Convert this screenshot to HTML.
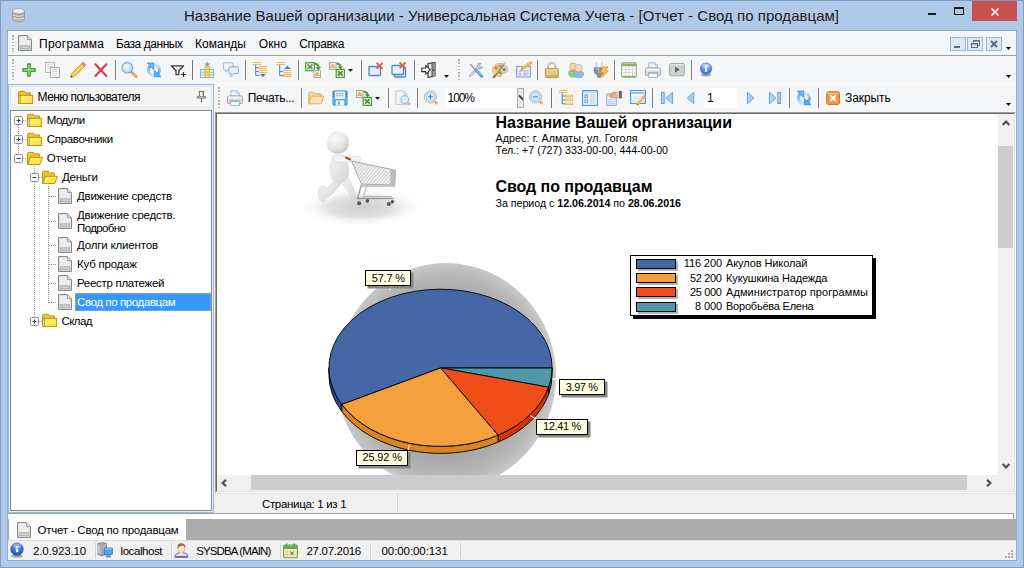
<!DOCTYPE html>
<html><head><meta charset="utf-8"><title>USU</title>
<style>
*{box-sizing:border-box;margin:0;padding:0}
html,body{width:1024px;height:568px;overflow:hidden}
body{background:#afcae8;font-family:"Liberation Sans",sans-serif;font-size:12px;color:#000;position:relative}
.a{position:absolute}
.t{position:absolute;white-space:nowrap;line-height:1}
.sep{position:absolute;width:1px;height:20px;background:#7a7a7a;box-shadow:1px 0 0 #fbfbfb,-1px 0 0 #fbfbfb}
.i{position:absolute;overflow:visible}
.lbl{position:absolute;background:#ffffe1;border:1px solid #000;box-shadow:2.5px 2.5px 0 #878787}
.grip{position:absolute;width:2px;height:21px;background:repeating-linear-gradient(#b4b4b4 0 1.6px,transparent 1.6px 3.3px)}

</style></head><body>
<div class="a" style="left:0;top:0;width:1024px;height:568px;border:1px solid #7e9cc2"></div>
<div class="a" style="left:928px;top:13px;width:8px;height:2px;background:#1b1b1b"></div>
<div class="a" style="left:954px;top:7px;width:10px;height:8px;border:1px solid #1b1b1b;border-top-width:2px"></div>
<div class="a" style="left:972px;top:1px;width:45px;height:20px;background:#c75050"></div>
<svg class="i" style="left:990px;top:7px" width="10" height="10" viewBox="0 0 10 10"><path d="M1.500 1.500L8.500 8.500M8.500 1.500L1.500 8.500" stroke="#fff" stroke-width="1.600" fill="none"/></svg>
<div class="a" style="left:7px;top:30px;width:1010px;height:531px;border:1px solid #8fa9c9;background:#f0f0f0"></div>
<div class="a" style="left:8px;top:31px;width:1008px;height:24px;background:#f5f6f7"></div>
<div class="a" style="left:8px;top:55px;width:1008px;height:1px;background:#a0a0a0"></div>
<div class="a" style="left:8px;top:56px;width:1008px;height:56px;background:#f5f6f7"></div>
<div class="a" style="left:214px;top:83px;width:802px;height:1px;background:#fcfcfc"></div>
<!-- mdi buttons -->
<div class="a" style="left:950px;top:37px;width:16px;height:14px;background:#dbe8f6;border:1px solid #a3b6cc"></div>
<div class="a" style="left:967px;top:37px;width:16px;height:14px;background:#dbe8f6;border:1px solid #a3b6cc"></div>
<div class="a" style="left:986px;top:37px;width:16px;height:14px;background:#dbe8f6;border:1px solid #a3b6cc"></div>
<div class="a" style="left:954px;top:46px;width:6px;height:2px;background:#5d6b7c"></div>
<svg class="i" style="left:967px;top:37px" width="16" height="14" viewBox="0 0 16 14"><path d="M6.5 5.5V3.5H12.5V8.5H10.5" stroke="#5d6b7c" fill="none"/><path d="M6 4H13" stroke="#5d6b7c"/><rect x="4.5" y="6.5" width="6" height="4" fill="none" stroke="#5d6b7c"/><path d="M4 7H11" stroke="#5d6b7c"/></svg>
<svg class="i" style="left:986px;top:37px" width="16" height="14" viewBox="0 0 16 14"><path d="M5 4L11 10M11 4L5 10" stroke="#5d6b7c" stroke-width="2" fill="none"/></svg>
<svg class="i" style="left:1006px;top:47px" width="5" height="3" viewBox="0 0 5 3"><path d="M0 0H5L2.5 3Z" fill="#000"/></svg>
<svg class="i" style="left:1006px;top:75px" width="5" height="3" viewBox="0 0 5 3"><path d="M0 0H5L2.5 3Z" fill="#000"/></svg>
<svg class="i" style="left:1006px;top:103px" width="5" height="3" viewBox="0 0 5 3"><path d="M0 0H5L2.5 3Z" fill="#000"/></svg>
<!-- left panel -->
<div class="a" style="left:8px;top:84px;width:206px;height:429px;border:1px solid #8dbdf0;background:#f0f0f0"></div>
<div class="a" style="left:10px;top:86px;width:202px;height:22px;background:#f5f5f5;border:1px solid #e2e3e4"></div>
<div class="a" style="left:10px;top:110px;width:202px;height:401px;background:#fff;border:1px solid #828790"></div>
<div class="a" style="left:75px;top:293px;width:136px;height:18px;background:#3399ff;border:1px dotted #e0a060"></div>
<!-- report -->
<div class="a" style="left:215px;top:112px;width:801px;height:381px;background:#fff"></div>
<div class="a" id="rep" style="left:217px;top:114px;width:781px;height:361px;background:#fff;overflow:hidden">
<svg class="i" style="left:83px;top:0px" width="125" height="112" viewBox="300 114 125 112">
<defs><radialGradient id="fl" cx=".5" cy=".5" r=".5"><stop offset="0" stop-color="#cfcfcf"/><stop offset=".5" stop-color="#e0e0e0"/><stop offset="1" stop-color="#fff" stop-opacity="0"/></radialGradient>
<radialGradient id="hd" cx=".38" cy=".32" r=".75"><stop offset="0" stop-color="#fbfbfb"/><stop offset=".6" stop-color="#e6e6e6"/><stop offset="1" stop-color="#c2c2c2"/></radialGradient>
<linearGradient id="bd" x1="0" y1="0" x2="1" y2="1"><stop offset="0" stop-color="#f6f6f6"/><stop offset="1" stop-color="#d2d2d2"/></linearGradient>
<pattern id="ht" width="2.6" height="2.6" patternUnits="userSpaceOnUse" patternTransform="rotate(40)"><rect width="2.6" height="2.6" fill="#f0f0f0"/><path d="M0 0V2.600" stroke="#b4b4b4" stroke-width="1"/></pattern></defs>
<ellipse cx="361" cy="207" rx="64" ry="20" fill="url(#fl)"/>
<path d="M338 177Q331 184 326.500 189Q326 186 323 185.500Q318 186 318 192Q318.500 199 321.500 201.500Q325 202.500 325.500 198.500Q331 196 334 192Q339 187 343 181Z" fill="url(#bd)" stroke="#cdcdcd" stroke-width="0.4"/>
<path d="M338 180Q345 186 349 193Q350 196 351.500 198Q352 202 356 202.300Q361 202.500 360.500 200Q358 197 356 195.500Q354 187 348 177Z" fill="url(#bd)" stroke="#cdcdcd" stroke-width="0.4"/>
<path d="M334 155Q329 163 330 173Q331 182 339 183Q348 182 349 173Q349.500 165 344 155Z" fill="url(#bd)" stroke="#d0d0d0" stroke-width="0.4"/>
<path d="M332 157Q333 161 338 162.500Q345 163 350 161.500L359 161.500Q362.500 160 361 157.500Q358 155.500 354 156.500L345 157Q338 154 334 154.500Z" fill="#f2f2f2" stroke="#cfcfcf" stroke-width="0.5"/>
<circle cx="337.700" cy="142.700" r="11.100" fill="url(#hd)"/>
<path d="M346 157.500L350 159.500" stroke="#d8342c" stroke-width="2" stroke-linecap="round"/>
<path d="M351.500 161L395.600 170.300L394.800 185L361.500 184.200Z" fill="url(#ht)" stroke="#a0a0a0" stroke-width="0.9"/>
<path d="M390.500 169.300L395.600 170.300L394.800 185L390 184.900Z" fill="#bcbcbc"/>
<path d="M361.500 184.500L357.500 198.500H393.500" fill="none" stroke="#989898" stroke-width="1.3"/>
<path d="M367 184.500L363.500 196.500H392" fill="none" stroke="#b4b4b4" stroke-width="1"/>
<path d="M361 186H395" stroke="#b8b8b8" stroke-width="1.600"/>
<circle cx="359.100" cy="203.200" r="2" fill="#5a5050"/><circle cx="367.400" cy="200.900" r="1.800" fill="#5a5050"/><circle cx="388.800" cy="204" r="2" fill="#5a5050"/><circle cx="392.400" cy="201.700" r="1.700" fill="#5a5050"/>
<circle cx="359.100" cy="203.200" r="0.800" fill="#c84040"/><circle cx="388.800" cy="204" r="0.800" fill="#c84040"/>
</svg><svg class="i" style="left:0;top:0" width="781" height="361" viewBox="217 114 781 361"><defs><radialGradient id="sh" cx=".5" cy=".5" r=".5"><stop offset="0" stop-color="#9c9c9c"/><stop offset=".7" stop-color="#a6a6a6"/><stop offset=".9" stop-color="#b8b8b8"/><stop offset="1" stop-color="#c9c9c9"/></radialGradient></defs><ellipse cx="446" cy="376" rx="110" ry="113" fill="url(#sh)"/><path d="M552.10 367.80A111.6 78.6 0 0 1 548.65 387.20L548.65 394.20A111.6 78.6 0 0 0 552.10 374.80Z" fill="#357888" stroke="#000" stroke-width="0.9"/><path d="M548.65 387.20A111.6 78.6 0 0 1 498.03 435.15L498.03 442.15A111.6 78.6 0 0 0 548.65 394.20Z" fill="#cf3608" stroke="#000" stroke-width="0.9"/><path d="M498.03 435.15A111.6 78.6 0 0 1 341.71 404.36L341.71 411.36A111.6 78.6 0 0 0 498.03 442.15Z" fill="#dc8420" stroke="#000" stroke-width="0.9"/><path d="M341.71 404.36A111.6 78.6 0 0 1 328.90 367.80L328.90 374.80A111.6 78.6 0 0 0 341.71 411.36Z" fill="#2f4a86" stroke="#000" stroke-width="0.9"/><path d="M440.50 367.80L552.10 367.80A111.6 78.6 0 0 1 548.65 387.20Z" fill="#4e98aa" stroke="#000" stroke-width="0.9" stroke-linejoin="round"/><path d="M440.50 367.80L548.65 387.20A111.6 78.6 0 0 1 498.03 435.15Z" fill="#f04e18" stroke="#000" stroke-width="0.9" stroke-linejoin="round"/><path d="M440.50 367.80L498.03 435.15A111.6 78.6 0 0 1 341.71 404.36Z" fill="#f4a03c" stroke="#000" stroke-width="0.9" stroke-linejoin="round"/><path d="M440.50 367.80L341.71 404.36A111.6 78.6 0 1 1 552.10 367.80Z" fill="#4667a5" stroke="#000" stroke-width="0.9" stroke-linejoin="round"/><path d="M389 285L390 290M408 450L409.5 444.5M530 415.5L536 419M552 379H559" stroke="#fff" stroke-width="1"/></svg><div class="lbl" style="left:148.0px;top:156.0px;width:46.0px;height:16.0px"></div><div class="lbl" style="left:342.0px;top:265.0px;width:46.0px;height:16.0px"></div><div class="lbl" style="left:319.0px;top:305.0px;width:52.0px;height:16.0px"></div><div class="lbl" style="left:139.0px;top:336.0px;width:52.0px;height:16.0px"></div><div class="a" style="left:413px;top:141px;width:243px;height:61px;background:#fff;border:1px solid #000;box-shadow:3px 3px 0 #000"></div><div class="a" style="left:419px;top:145.0px;width:40px;height:10px;background:#4667a5;border:1px solid #000;box-shadow:2px 2px 0 #b4b4b4"></div><div class="a" style="left:419px;top:159.2px;width:40px;height:10px;background:#f4a03c;border:1px solid #000;box-shadow:2px 2px 0 #b4b4b4"></div><div class="a" style="left:419px;top:173.3px;width:40px;height:10px;background:#f04e18;border:1px solid #000;box-shadow:2px 2px 0 #b4b4b4"></div><div class="a" style="left:419px;top:187.5px;width:40px;height:10px;background:#4e98aa;border:1px solid #000;box-shadow:2px 2px 0 #b4b4b4"></div>
</div>
<div class="a" style="left:215px;top:112px;width:801px;height:381px;border:1px solid;border-color:#a0a0a0 #fff #fff #a0a0a0"></div>
<div class="a" style="left:216px;top:113px;width:799px;height:379px;border:1px solid;border-color:#696969 #e3e3e3 #e3e3e3 #696969"></div>
<!-- scrollbars -->
<div class="a" style="left:998px;top:114px;width:16px;height:377px;background:#f0f0f0"></div>
<div class="a" style="left:217px;top:475px;width:797px;height:16px;background:#f0f0f0"></div>
<div class="a" style="left:998px;top:146px;width:15px;height:102px;background:#cdcdcd"></div>
<div class="a" style="left:251px;top:475px;width:716px;height:15px;background:#cdcdcd"></div>
<svg class="i" style="left:1002px;top:120px" width="8" height="6" viewBox="0 0 8 6"><path d="M0.7 5L4 1.6L7.3 5" stroke="#4d4d4d" stroke-width="2.1" fill="none"/></svg>
<svg class="i" style="left:1002px;top:463px" width="8" height="6" viewBox="0 0 8 6"><path d="M0.7 1L4 4.4L7.3 1" stroke="#4d4d4d" stroke-width="2.1" fill="none"/></svg>
<svg class="i" style="left:221px;top:479px" width="6" height="8" viewBox="0 0 6 8"><path d="M5 0.7L1.6 4L5 7.3" stroke="#4d4d4d" stroke-width="2.1" fill="none"/></svg>
<svg class="i" style="left:986px;top:479px" width="6" height="8" viewBox="0 0 6 8"><path d="M1 0.7L4.4 4L1 7.3" stroke="#4d4d4d" stroke-width="2.1" fill="none"/></svg>
<!-- page status -->
<div class="a" style="left:215px;top:493px;width:801px;height:1px;background:#e2e2e2"></div>
<div class="a" style="left:397px;top:494px;width:1px;height:18px;background:#d5d5d5"></div>
<div class="a" style="left:8px;top:513px;width:1006px;height:6px;background:#fff;border-top:1px solid #a0a0a0;border-right:1px solid #a0a0a0"></div>
<div class="a" style="left:8px;top:519px;width:1008px;height:21px;background:#ababab"></div>
<div class="a" style="left:9px;top:518px;width:177px;height:22px;background:#fff"></div>
<div class="a" style="left:8px;top:540px;width:1008px;height:1px;background:#dcdcdc"></div>
<!-- status bar dividers -->
<div class="a" style="left:95px;top:543px;width:1px;height:16px;background:#d2d2d2"></div>
<div class="a" style="left:171px;top:543px;width:1px;height:16px;background:#d2d2d2"></div>
<div class="a" style="left:280px;top:543px;width:1px;height:16px;background:#d2d2d2"></div>
<div class="a" style="left:370px;top:543px;width:1px;height:16px;background:#d2d2d2"></div>
<div class="a" style="left:460px;top:543px;width:1px;height:16px;background:#d2d2d2"></div>
<svg class="i" style="left:1002px;top:547px" width="12" height="12" viewBox="0 0 12 12"><g fill="#b0b0b0"><rect x="9" y="9" width="2" height="2"/><rect x="6" y="9" width="2" height="2"/><rect x="3" y="9" width="2" height="2"/><rect x="9" y="6" width="2" height="2"/><rect x="6" y="6" width="2" height="2"/><rect x="9" y="3" width="2" height="2"/></g></svg>

<div class="sep" style="left:115px;top:60px"></div>
<div class="sep" style="left:192px;top:60px"></div>
<div class="sep" style="left:245px;top:60px"></div>
<div class="sep" style="left:298px;top:60px"></div>
<div class="sep" style="left:361px;top:60px"></div>
<div class="sep" style="left:414px;top:60px"></div>
<div class="sep" style="left:537px;top:60px"></div>
<div class="sep" style="left:614px;top:60px"></div>
<div class="sep" style="left:691px;top:60px"></div>
<div class="sep" style="left:301px;top:88px"></div>
<div class="sep" style="left:388px;top:88px"></div>
<div class="sep" style="left:417px;top:88px"></div>
<div class="sep" style="left:551px;top:88px"></div>
<div class="sep" style="left:652px;top:88px"></div>
<div class="sep" style="left:789px;top:88px"></div>
<div class="sep" style="left:818px;top:88px"></div>
<div class="grip" style="left:12px;top:59px;height:21px"></div>
<div class="grip" style="left:458px;top:59px;height:21px"></div>
<div class="grip" style="left:218px;top:87px;height:21px"></div>
<div class="grip" style="left:12px;top:35px;height:17px"></div>
<div class="a" style="left:445px;top:88px;width:72px;height:20px;background:#fff"></div>
<div class="a" style="left:517px;top:88px;width:7px;height:20px;background:#e9e9e9;border:1px solid #adadad"></div>
<svg class="a" style="left:517px;top:94px;overflow:hidden" width="6" height="8" viewBox="0 0 6 8"><path d="M2 1.400L5.800 5.400L8 3.2" stroke="#3a3a3a" stroke-width="1.9" fill="none"/></svg>
<div class="a" style="left:704px;top:88px;width:34px;height:20px;background:#fff"></div>
<div class="a" style="left:18px;top:125px;width:1px;height:10px;background:repeating-linear-gradient(180deg,#9a9a9a 0 1px,transparent 1px 2px)"></div>
<div class="a" style="left:18px;top:144px;width:1px;height:10px;background:repeating-linear-gradient(180deg,#9a9a9a 0 1px,transparent 1px 2px)"></div>
<div class="a" style="left:23px;top:120px;width:3px;height:1px;background:repeating-linear-gradient(90deg,#9a9a9a 0 1px,transparent 1px 2px)"></div>
<div class="a" style="left:23px;top:139px;width:3px;height:1px;background:repeating-linear-gradient(90deg,#9a9a9a 0 1px,transparent 1px 2px)"></div>
<div class="a" style="left:23px;top:158px;width:3px;height:1px;background:repeating-linear-gradient(90deg,#9a9a9a 0 1px,transparent 1px 2px)"></div>
<div class="a" style="left:34px;top:166px;width:1px;height:7px;background:repeating-linear-gradient(180deg,#9a9a9a 0 1px,transparent 1px 2px)"></div>
<div class="a" style="left:34px;top:182px;width:1px;height:135px;background:repeating-linear-gradient(180deg,#9a9a9a 0 1px,transparent 1px 2px)"></div>
<div class="a" style="left:39px;top:177px;width:3px;height:1px;background:repeating-linear-gradient(90deg,#9a9a9a 0 1px,transparent 1px 2px)"></div>
<div class="a" style="left:39px;top:321px;width:3px;height:1px;background:repeating-linear-gradient(90deg,#9a9a9a 0 1px,transparent 1px 2px)"></div>
<div class="a" style="left:48px;top:186px;width:1px;height:117px;background:repeating-linear-gradient(180deg,#9a9a9a 0 1px,transparent 1px 2px)"></div>
<div class="a" style="left:49px;top:196px;width:8px;height:1px;background:repeating-linear-gradient(90deg,#9a9a9a 0 1px,transparent 1px 2px)"></div>
<div class="a" style="left:49px;top:221px;width:8px;height:1px;background:repeating-linear-gradient(90deg,#9a9a9a 0 1px,transparent 1px 2px)"></div>
<div class="a" style="left:49px;top:245px;width:8px;height:1px;background:repeating-linear-gradient(90deg,#9a9a9a 0 1px,transparent 1px 2px)"></div>
<div class="a" style="left:49px;top:264px;width:8px;height:1px;background:repeating-linear-gradient(90deg,#9a9a9a 0 1px,transparent 1px 2px)"></div>
<div class="a" style="left:49px;top:283px;width:8px;height:1px;background:repeating-linear-gradient(90deg,#9a9a9a 0 1px,transparent 1px 2px)"></div>
<div class="a" style="left:49px;top:302px;width:8px;height:1px;background:repeating-linear-gradient(90deg,#9a9a9a 0 1px,transparent 1px 2px)"></div>
<svg width="0" height="0" style="position:absolute"><defs><radialGradient id="mg" cx=".4" cy=".35" r=".7"><stop offset="0" stop-color="#f2f9ff"/><stop offset="1" stop-color="#b4d8f6"/></radialGradient><linearGradient id="rf1" x1="0" y1="0" x2="0" y2="1"><stop offset="0" stop-color="#5ea6e6"/><stop offset="1" stop-color="#cfe6f9"/></linearGradient><linearGradient id="rf2" x1="0" y1="0" x2="0" y2="1"><stop offset="0" stop-color="#d6eafa"/><stop offset="1" stop-color="#4f9ce2"/></linearGradient><linearGradient id="fg" x1="0" y1="0" x2="1" y2="1"><stop offset="0" stop-color="#fff78a"/><stop offset="1" stop-color="#ffd92e"/></linearGradient><radialGradient id="gs" cx=".5" cy=".3" r=".75"><stop offset="0" stop-color="#6a9ce8"/><stop offset=".6" stop-color="#2f68cc"/><stop offset="1" stop-color="#1f4ca8"/></radialGradient><radialGradient id="gi" cx=".5" cy=".3" r=".75"><stop offset="0" stop-color="#9cc0f6"/><stop offset=".6" stop-color="#4f86de"/><stop offset="1" stop-color="#3262be"/></radialGradient></defs></svg>
<svg class="i" style="left:12px;top:8px" width="13" height="15" viewBox="0 0 13 15"><ellipse cx="6.5" cy="11" rx="6" ry="3" fill="#bdbdbd" stroke="#8e8e8e" stroke-width="0.7"/><rect x="0.5" y="3" width="12" height="8" fill="#cfcfcf"/><path d="M0.5 3V11M12.5 3V11" stroke="#8e8e8e" stroke-width="0.7"/><path d="M0.5 5.6Q6.5 8.6 12.5 5.6M0.5 8.2Q6.500 11.200 12.5 8.2" stroke="#8a8a8a" stroke-width="0.8" fill="none"/><ellipse cx="6.5" cy="3" rx="6" ry="2.600" fill="#ececec" stroke="#9a9a9a" stroke-width="0.7"/></svg>
<svg class="i" style="left:18px;top:35px" width="14" height="16" viewBox="0 0 14 16"><path d="M0.6 0.6H9.4L13.4 4.6V15.4H0.6Z" fill="#ededed" stroke="#7c7c7c" stroke-width="1" stroke-linejoin="round"/><path d="M9.4 0.6V4.6H13.4" fill="#dadada" stroke="#8c8c8c" stroke-width="0.8"/><rect x="2.2" y="10.8" width="9.6" height="3" fill="#cfcfcf" stroke="#a4a4a4" stroke-width="0.8"/></svg>
<svg class="i" style="left:22px;top:63px" width="16" height="16" viewBox="0 0 16 16"><path d="M5.5 0.7H8.5V5.5H13.3V8.5H8.5V13.3H5.5V8.5H0.7V5.5H5.5Z" fill="#56bd46" stroke="#3e9e30" stroke-width="0.9" stroke-linejoin="round"/><path d="M7 2V12M2 7H12" stroke="#b4eaa4" stroke-width="0.9"/></svg>
<svg class="i" style="left:45px;top:62px" width="16" height="16" viewBox="0 0 16 16"><rect x="0.5" y="0.5" width="9" height="10" fill="#f6f6f6" stroke="#b4b4b4"/><path d="M2 2.5H8M2 4.5H8M2 6.5H5" stroke="#cfcfcf" stroke-width="0.8"/><rect x="5.5" y="5.5" width="9" height="10" fill="#f9f9f9" stroke="#a8a8a8"/><path d="M7.5 7.5H12.5M7.5 9.5H12.5M7.5 11.5H12.5M7.5 13.5H11" stroke="#c6c6c6" stroke-width="0.8"/></svg>
<svg class="i" style="left:70px;top:62px" width="16" height="16" viewBox="0 0 16 16"><path d="M0.6 15.4L1.8 11.2L11.4 1.6L14.4 4.6L4.8 14.2Z" fill="#f5c53a" stroke="#c89a28" stroke-width="0.8"/><path d="M3.3 12.7L12.9 3.1" stroke="#fbe28a" stroke-width="1.2"/><path d="M11.4 1.6L12.6 0.5Q13.4 0 14.2 0.8L15.3 1.9Q15.9 2.7 15.3 3.4L14.4 4.6Z" fill="#ee8a8a" stroke="#c86a6a" stroke-width="0.6"/><path d="M0.6 15.4L1.8 11.2L4.8 14.2Z" fill="#e8cfa0"/><path d="M0.6 15.4L1.2 13.2L2.8 14.8Z" fill="#3a3a3a"/></svg>
<svg class="i" style="left:93px;top:62px" width="16" height="16" viewBox="0 0 16 16"><path d="M2.4 2.2L13.4 14M13.4 2.2L2.4 14" stroke="#d2404c" stroke-width="2.1" stroke-linecap="round" fill="none"/></svg>
<svg class="i" style="left:121px;top:62px" width="16" height="16" viewBox="0 0 16 16"><path d="M10 9.8L15 14.6" stroke="#d99848" stroke-width="2.8" stroke-linecap="round"/><path d="M10.4 10L14.6 14.2" stroke="#f6cf90" stroke-width="1"/><circle cx="6.3" cy="5.8" r="5.3" fill="url(#mg)" stroke="#7eb2e0" stroke-width="1.3"/></svg>
<svg class="i" style="left:146px;top:62px" width="16" height="16" viewBox="0 0 16 16"><path d="M7.4 13.6A5.3 5.6 0 0 1 4.4 3.8" fill="none" stroke="url(#rf1)" stroke-width="3"/><path d="M8.6 2.4A5.3 5.6 0 0 1 11.6 12.2" fill="none" stroke="url(#rf2)" stroke-width="3"/><path d="M1.3 1H7.8V7.6Z" fill="#6cbcf6" stroke="#3f8edc" stroke-width="0.9" stroke-linejoin="round"/><path d="M8.3 8.4L15 14.7H8.3Z" fill="#52b8fa" stroke="#3f8edc" stroke-width="0.9" stroke-linejoin="round"/></svg>
<svg class="i" style="left:170px;top:62px" width="16" height="16" viewBox="0 0 16 16"><path d="M1.2 3.8H13.6L8.8 8.8V12.6H6V8.8Z" fill="#e6e6e6" stroke="#3c3c3c" stroke-width="1.3" stroke-linejoin="round"/><path d="M11 12.5H16M13.5 10V15" stroke="#2d2d2d" stroke-width="1.2"/></svg>
<svg class="i" style="left:199px;top:62px" width="16" height="16" viewBox="0 0 16 16"><rect x="1.5" y="7.5" width="13" height="8" fill="#fff" stroke="#7cb2f0"/><path d="M1.5 10.200H14.5M1.5 12.900H14.5" stroke="#7cb2f0"/><rect x="6" y="4.5" width="4.600" height="11" fill="#fae466" stroke="#d8b03a" stroke-width="0.9"/><path d="M6 7.3H10.6M6 10.100H10.600M6 12.900H10.600" stroke="#d8b03a" stroke-width="0.9"/><path d="M8.3 0V2.800M5.900 1.4L8.300 3.800L10.700 1.400" stroke="#6aa6e6" stroke-width="1.3" fill="none"/></svg>
<svg class="i" style="left:223px;top:62px" width="16" height="16" viewBox="0 0 16 16"><path d="M1.5 0.8H8.8Q10 0.8 10 2V6.5Q10 7.7 8.8 7.7H5.2L2.8 10V7.7H1.5Q0.6 7.7 0.6 6.5V2Q0.6 0.8 1.5 0.8Z" fill="#eef5fc" stroke="#8db6de"/><path d="M7 4.8H14.3Q15.4 4.8 15.4 6V10.5Q15.4 11.7 14.3 11.7H10.6L8 14.6V11.7H7Q5.9 11.7 5.9 10.5V6Q5.9 4.8 7 4.8Z" fill="#e6f0fa" stroke="#7fabd8"/></svg>
<svg class="i" style="left:252px;top:62px" width="16" height="16" viewBox="0 0 16 16"><path d="M3.7 2.6V13.3M3.7 5.6H7M3.7 9.6H7M3.7 13.3H7.6" stroke="#3f7fd8" fill="none" stroke-width="1"/><rect x="1.2" y="0.6" width="7.6" height="1.800" fill="#fdf3d0" stroke="#e2ae48" stroke-width="0.8"/><rect x="7.2" y="4.600" width="7.6" height="1.900" fill="#fdf3d0" stroke="#e2ae48" stroke-width="0.8"/><rect x="7.2" y="8.600" width="7.6" height="1.900" fill="#fdf3d0" stroke="#e2ae48" stroke-width="0.8"/><path d="M7.8 12.1H14L10.9 15.1Z" fill="#3f7fd8"/></svg>
<svg class="i" style="left:276px;top:62px" width="16" height="16" viewBox="0 0 16 16"><path d="M3.7 2.6V13.6M3.7 13.6H7.2M3.7 9.6H7.2" stroke="#3f7fd8" fill="none" stroke-width="1"/><rect x="1.2" y="0.6" width="7.6" height="1.800" fill="#fdf3d0" stroke="#e2ae48" stroke-width="0.8"/><rect x="7.4" y="8.600" width="7.4" height="1.900" fill="#fdf3d0" stroke="#e2ae48" stroke-width="0.8"/><rect x="7.4" y="12.500" width="7.4" height="1.900" fill="#fdf3d0" stroke="#e2ae48" stroke-width="0.8"/><path d="M7.9 6.9H15L11.4 3.7Z" fill="#3f7fd8"/></svg>
<svg class="i" style="left:305px;top:62px" width="16" height="16" viewBox="0 0 16 16"><rect x="0.7" y="0.7" width="8.6" height="8" fill="#eaf5e4" stroke="#4a9a3e" stroke-width="1.2"/><path d="M2.5 2.5L7.5 7M7.5 2.5L2.5 7" stroke="#3f9134" stroke-width="1.6"/><path d="M9.5 1.5Q13.5 2 13.5 5.5" stroke="#3fa132" stroke-width="2" fill="none"/><path d="M10.6 5H16L13.4 8.4Z" fill="#3fa132"/><rect x="9" y="8.5" width="6.5" height="7" fill="#f2f2f2" stroke="#a8a8a8"/><path d="M12.2 10L14.4 13.6H10Z" fill="#f6b73a" stroke="#d98f1f" stroke-width="0.6"/></svg>
<svg class="i" style="left:329px;top:62px" width="16" height="16" viewBox="0 0 16 16"><rect x="0.5" y="0.5" width="6.5" height="7" fill="#f2f2f2" stroke="#a8a8a8"/><path d="M3.7 2L5.9 5.6H1.5Z" fill="#f6b73a" stroke="#d98f1f" stroke-width="0.6"/><path d="M7.5 1.5Q11.5 2 11.5 5" stroke="#3fa132" stroke-width="2" fill="none"/><path d="M8.8 4.4H14.2L11.5 7.6Z" fill="#3fa132"/><rect x="7.2" y="7.4" width="8.2" height="8" fill="#eaf5e4" stroke="#4a9a3e" stroke-width="1.2"/><path d="M9 9.2L13.6 13.6M13.6 9.2L9 13.6" stroke="#3f9134" stroke-width="1.6"/></svg>
<svg class="i" style="left:348px;top:68.5px" width="5" height="3" viewBox="0 0 5 3"><path d="M0 0H5L2.5 2.8Z" fill="#000"/></svg>
<svg class="i" style="left:368px;top:62px" width="16" height="16" viewBox="0 0 16 16"><rect x="1" y="4.5" width="11.5" height="9" rx="1" fill="#e9f2fc" stroke="#3f86dc" stroke-width="1.3"/><path d="M2 6H11.5" stroke="#cfe2f8" stroke-width="1.4"/><path d="M8.6 0.8L14.6 6.8M14.6 0.8L8.6 6.8" stroke="#e0603c" stroke-width="1.9"/></svg>
<svg class="i" style="left:391px;top:62px" width="16" height="16" viewBox="0 0 16 16"><rect x="3.5" y="6.5" width="11" height="8.5" rx="1" fill="#e9f2fc" stroke="#3f86dc" stroke-width="1.3"/><rect x="1" y="3.5" width="11.5" height="9" rx="1" fill="#e9f2fc" stroke="#3f86dc" stroke-width="1.3"/><path d="M8.6 0.3L14.6 6.3M14.6 0.3L8.6 6.3" stroke="#e0603c" stroke-width="1.9"/></svg>
<svg class="i" style="left:421px;top:62px" width="16" height="16" viewBox="0 0 16 16"><path d="M7 1.5L14 0.5V14L7 15.5Z" fill="#e3e3e3" stroke="#2e2e2e" stroke-width="1.1" stroke-linejoin="round"/><path d="M11 1.2V14.8H13.6V1Z" fill="#9a9a9a"/><path d="M11 1V15" stroke="#2e2e2e" stroke-width="0.8"/><path d="M12.4 7.5V9" stroke="#2e2e2e"/><path d="M0.8 6H4.8V3.4L9.2 7.8L4.8 12.2V9.6H0.8Z" fill="#fff" stroke="#2e2e2e" stroke-width="1.1" stroke-linejoin="round"/></svg>
<svg class="i" style="left:444px;top:75px" width="5" height="3" viewBox="0 0 5 3"><path d="M0 0H5L2.5 2.8Z" fill="#000"/></svg>
<svg class="i" style="left:468px;top:62px" width="16" height="16" viewBox="0 0 16 16"><path d="M2 14L11 4.5" stroke="#b9bcc0" stroke-width="2.6" stroke-linecap="round"/><path d="M10 1.5A3.2 3.2 0 0 0 10.5 6.5A3.2 3.2 0 0 0 14.8 5L12.6 5.2L11.6 3.4L12.8 1.4A3.2 3.2 0 0 0 10 1.5Z" fill="#c9ccd0" stroke="#8f9499" stroke-width="0.7"/><path d="M2 14L11 4.5" stroke="#e7e9eb" stroke-width="0.9"/><path d="M2 2L8 8.3" stroke="#8a8f96" stroke-width="1.2"/><path d="M8 8.3L13.8 14.2" stroke="#4a9fe8" stroke-width="3" stroke-linecap="round"/><path d="M8.8 8.6L13.6 13.5" stroke="#a6d4f8" stroke-width="0.9"/></svg>
<svg class="i" style="left:492px;top:62px" width="16" height="16" viewBox="0 0 16 16"><path d="M8 1.5C12.5 1.5 15.5 4.2 15.5 7.6C15.5 10.6 13.2 11.4 11.2 11.2C9.8 11.1 9.4 12.2 9.8 13C10.2 14 9.4 14.8 7.6 14.6C3.6 14.2 0.6 11.4 0.6 7.8C0.6 4.2 3.8 1.5 8 1.5Z" fill="#f3d199" stroke="#d6ab6a" stroke-width="0.8"/><circle cx="4" cy="6" r="1.7" fill="#ee6a5a"/><circle cx="8" cy="3.9" r="1.5" fill="#9a9a9a"/><circle cx="12.2" cy="7.6" r="1.7" fill="#4c8ee0"/><circle cx="8.4" cy="11" r="1.6" fill="#58b84c"/><circle cx="4.2" cy="10.2" r="1.4" fill="#f2df48"/><path d="M2 15.5L12.5 1.5" stroke="#b0704a" stroke-width="1.3"/><path d="M11.6 2.8L13.8 0" stroke="#c9c9c9" stroke-width="1.8"/><path d="M1 16L3.4 13" stroke="#6a6a6a" stroke-width="1.7"/></svg>
<svg class="i" style="left:516px;top:62px" width="16" height="16" viewBox="0 0 16 16"><rect x="0.7" y="4.5" width="13.6" height="10.5" fill="#f1f4fd" stroke="#9a98d4" stroke-width="1.2"/><path d="M2.5 9H6M2.5 11.2H5M2.5 13H5.5M7 9H12.5M7 11.2H12.5M7 13H11.5" stroke="#7fa0e0" stroke-width="0.9"/><path d="M5 8.2L6.6 6.2" stroke="#2c3fd0" stroke-width="1.4"/><path d="M6.4 6.8L14.8 0.8" stroke="#f2a93a" stroke-width="3" stroke-linecap="round"/><path d="M7 6L14.4 0.9" stroke="#fad080" stroke-width="0.9"/></svg>
<svg class="i" style="left:544px;top:62px" width="16" height="16" viewBox="0 0 16 16"><path d="M4.2 7V4.6A3.6 3.6 0 0 1 11.4 4.6V7" fill="none" stroke="#b0b0b0" stroke-width="2"/><path d="M4.2 7V4.6A3.6 3.6 0 0 1 11.4 4.6V7" fill="none" stroke="#e6e6e6" stroke-width="0.7"/><rect x="1.3" y="6.6" width="13" height="8.9" rx="1" fill="#e3c87c" stroke="#b8964a" stroke-width="1"/><path d="M2.2 8H13.4" stroke="#f4e2a8" stroke-width="1.2"/><path d="M2.2 13.8H13.4" stroke="#cbab5c" stroke-width="1.4"/></svg>
<svg class="i" style="left:568px;top:62px" width="16" height="16" viewBox="0 0 16 16"><ellipse cx="5" cy="11.2" rx="4.4" ry="3.9" fill="#8fd07c" stroke="#67b558" stroke-width="0.7"/><circle cx="5.2" cy="4.6" r="3.6" fill="#f8d7a4" stroke="#e4a860" stroke-width="0.8"/><path d="M4.4 8.4L5.2 9.8L6 8.4" fill="#e05050"/><ellipse cx="10.8" cy="12.2" rx="4.8" ry="3.6" fill="#8cbcf2" stroke="#5e98e0" stroke-width="0.7"/><circle cx="10.6" cy="6" r="3.8" fill="#fbdcd4" stroke="#ea9a8c" stroke-width="0.8"/></svg>
<svg class="i" style="left:593px;top:62px" width="16" height="16" viewBox="0 0 16 16"><path d="M3.400 0.8V6M8.800 0.8V6" stroke="#e0e3e6" stroke-width="2" stroke-linecap="round"/><path d="M3.400 0.8V6M8.800 0.8V6" stroke="#a8adb2" stroke-width="0.5"/><path d="M1.200 5.8H11V9.200Q11 12.200 7.800 12.600V15.200H4.600V12.600Q1.200 12.200 1.200 9.200Z" fill="#8e8e8e" stroke="#6a6a6a" stroke-width="0.6"/><path d="M2.400 6.800H5.600V11.600" stroke="#b8b8b8" stroke-width="1.200" fill="none"/><path d="M10.200 5L15 5L12.400 9H15.400L8.600 15.400L10.400 10.600H7.400Z" fill="#fac846" stroke="#e8923a" stroke-width="1"/></svg>
<svg class="i" style="left:621px;top:62px" width="16" height="16" viewBox="0 0 16 16"><rect x="0.7" y="0.7" width="14.6" height="14.6" rx="1.4" fill="#fff" stroke="#8aa870" stroke-width="1"/><path d="M1 1.400H15V4.400H1Z" fill="#90b278"/><path d="M1.2 7.600H14.800M1.2 10.600H14.800M4.600 4.600V14.600M8 4.600V14.600M11.400 4.600V14.600" stroke="#d4d4d4" stroke-width="1"/><path d="M1 14.400H15" stroke="#8aa870" stroke-width="1.200"/></svg>
<svg class="i" style="left:645px;top:62px" width="16" height="16" viewBox="0 0 16 16"><path d="M3.8 6.5V0.8H10L12.4 3.2V6.5Z" fill="#eaf2fc" stroke="#8db6ea" stroke-width="0.9"/><path d="M10 0.8V3.2H12.4" fill="#cfe0f6" stroke="#8db6ea" stroke-width="0.7"/><path d="M2.6 5.8H13.4Q15.6 5.8 15.6 8V12.6Q15.600 13.400 14.8 13.4H1.2Q0.4 13.4 0.4 12.6V8Q0.4 5.8 2.6 5.8Z" fill="#dedede" stroke="#a2a2a2" stroke-width="0.9"/><path d="M1.4 7.6H14.6" stroke="#f7f7f7" stroke-width="1.6"/><path d="M2.6 10.600H13.400" stroke="#b2b2b2" stroke-width="1.1"/><rect x="3.6" y="11.4" width="8.8" height="4" fill="#fbfdff" stroke="#86b2e8" stroke-width="0.9"/></svg>
<svg class="i" style="left:669px;top:62px" width="16" height="16" viewBox="0 0 16 16"><rect x="0.6" y="1.4" width="14.8" height="12.4" rx="1.6" fill="#cdd2cf" stroke="#a2aaa6" stroke-width="1"/><path d="M1.6 2.6H14.4" stroke="#e0e4e2" stroke-width="1.2"/><path d="M6 4.400L10.800 7.600L6 10.800Z" fill="#5f6663"/></svg>
<svg class="i" style="left:698px;top:62px" width="16" height="16" viewBox="0 0 16 16"><ellipse cx="8" cy="12.800" rx="5" ry="1.800" fill="#555" opacity=".5"/><circle cx="8" cy="6.600" r="5.800" fill="url(#gi)" stroke="#4a78cc" stroke-width="0.5"/><ellipse cx="8" cy="3.800" rx="4" ry="2.300" fill="#fff" opacity=".35"/><rect x="7" y="6" width="2" height="3.800" rx="0.5" fill="#fff"/><circle cx="8" cy="4.200" r="1.100" fill="#fff"/></svg>
<svg class="i" style="left:227px;top:90px" width="16" height="16" viewBox="0 0 16 16"><path d="M3.8 6.5V0.8H10L12.4 3.2V6.5Z" fill="#eaf2fc" stroke="#8db6ea" stroke-width="0.9"/><path d="M10 0.8V3.2H12.4" fill="#cfe0f6" stroke="#8db6ea" stroke-width="0.7"/><path d="M2.6 5.8H13.4Q15.6 5.8 15.6 8V12.6Q15.600 13.400 14.8 13.4H1.2Q0.4 13.4 0.4 12.6V8Q0.4 5.8 2.6 5.8Z" fill="#dedede" stroke="#a2a2a2" stroke-width="0.9"/><path d="M1.4 7.6H14.6" stroke="#f7f7f7" stroke-width="1.6"/><path d="M2.6 10.600H13.400" stroke="#b2b2b2" stroke-width="1.1"/><rect x="3.6" y="11.4" width="8.8" height="4" fill="#fbfdff" stroke="#86b2e8" stroke-width="0.9"/></svg>
<svg class="i" style="left:308px;top:90px" width="16" height="16" viewBox="0 0 16 16"><path d="M0.8 13.4V3.2Q0.8 2.2 1.8 2.2H5.4L6.8 3.8H12.6Q13.6 3.8 13.6 4.8V6.4" fill="#f7d9a2" stroke="#e3ab58" stroke-width="1"/><path d="M0.8 13.6L3 7Q3.3 6.2 4.2 6.2H15Q16 6.2 15.6 7.2L13.6 13Q13.3 13.8 12.4 13.8H1.4Q0.6 13.8 0.8 13.6Z" fill="#fbe6bc" stroke="#e3ab58" stroke-width="1"/></svg>
<svg class="i" style="left:332px;top:90px" width="16" height="16" viewBox="0 0 16 16"><path d="M1.6 0.6H14.4Q15.4 0.6 15.4 1.6V14.4Q15.400 15.400 14.400 15.400H1.6Q0.6 15.4 0.6 14.4V1.6Q0.6 0.6 1.600 0.600Z" fill="#5aa9ea" stroke="#7cbcf0" stroke-width="0.9"/><rect x="2.8" y="1.6" width="10.4" height="7.2" fill="#f6fafe"/><path d="M4.2 3.600H11.800M4.2 5.800H11.800" stroke="#7a8a9a" stroke-width="1" stroke-dasharray="1.8 0.8"/><path d="M2 2.200V7.500M14 2.200V7.500" stroke="#2f74b8" stroke-width="0.9"/><rect x="4" y="10.600" width="8" height="4.900" fill="#f2f4f6" stroke="#d0dae4" stroke-width="0.5"/><rect x="6" y="11.600" width="1.800" height="3.200" fill="#8a98a6"/></svg>
<svg class="i" style="left:356px;top:90px" width="16" height="16" viewBox="0 0 16 16"><rect x="0.5" y="0.5" width="6.5" height="7" fill="#f2f2f2" stroke="#a8a8a8"/><path d="M3.7 2L5.9 5.6H1.5Z" fill="#f6b73a" stroke="#d98f1f" stroke-width="0.6"/><path d="M7.5 1.5Q11.5 2 11.5 5" stroke="#3fa132" stroke-width="2" fill="none"/><path d="M8.8 4.4H14.2L11.5 7.6Z" fill="#3fa132"/><rect x="7.2" y="7.4" width="8.2" height="8" fill="#eaf5e4" stroke="#4a9a3e" stroke-width="1.2"/><path d="M9 9.2L13.6 13.6M13.6 9.2L9 13.6" stroke="#3f9134" stroke-width="1.6"/></svg>
<svg class="i" style="left:375px;top:96.5px" width="5" height="3" viewBox="0 0 5 3"><path d="M0 0H5L2.5 2.8Z" fill="#000"/></svg>
<svg class="i" style="left:395px;top:90px" width="16" height="16" viewBox="0 0 16 16"><path d="M0.8 0.8H8.6L12 4.200V14.600H0.8Z" fill="#f3f3f3" stroke="#cacaca" stroke-width="1"/><path d="M8.6 0.8V4.2H12" fill="#e4e4e4" stroke="#cacaca" stroke-width="0.8"/><circle cx="14" cy="13.800" r="1.500" fill="#f4b050"/><circle cx="9.800" cy="9.600" r="3.900" fill="#dceefc" stroke="#8fc0ea" stroke-width="1.200"/></svg>
<svg class="i" style="left:423px;top:90px" width="16" height="16" viewBox="0 0 16 16"><path d="M11.400 11L13.400 13" stroke="#f4b458" stroke-width="3" stroke-linecap="round"/><circle cx="7.5" cy="6.800" r="6.2" fill="#e1e3e5" stroke="#b4b8bc" stroke-width="0.9"/><circle cx="7.5" cy="6.800" r="4.4" fill="#d2eafc" stroke="#86beea" stroke-width="0.8"/><path d="M5 6.800H10M7.5 4.300V9.300" stroke="#4a88cc" stroke-width="1.100"/></svg>
<svg class="i" style="left:528px;top:90px" width="16" height="16" viewBox="0 0 16 16"><path d="M11.400 11L13.400 13" stroke="#f4b458" stroke-width="3" stroke-linecap="round"/><circle cx="7.5" cy="6.800" r="6.2" fill="#e1e3e5" stroke="#b4b8bc" stroke-width="0.9"/><circle cx="7.5" cy="6.800" r="4.4" fill="#d2eafc" stroke="#86beea" stroke-width="0.8"/><path d="M5 6.800H10" stroke="#4a88cc" stroke-width="1.100"/></svg>
<svg class="i" style="left:558px;top:90px" width="16" height="16" viewBox="0 0 16 16"><path d="M4.2 2.6V14M4.2 6H8M4.2 9.900H8M4.2 13.800H8" stroke="#3f7fd8" fill="none" stroke-width="1"/><rect x="1.5" y="0.6" width="7.4" height="1.800" fill="#fdf3d0" stroke="#e2ae48" stroke-width="0.8"/><rect x="7.6" y="5.100" width="7" height="1.800" fill="#fdf3d0" stroke="#e2ae48" stroke-width="0.8"/><rect x="7.6" y="8.900" width="7" height="1.800" fill="#fdf3d0" stroke="#e2ae48" stroke-width="0.8"/><rect x="7.6" y="12.900" width="7" height="1.800" fill="#fdf3d0" stroke="#e2ae48" stroke-width="0.8"/></svg>
<svg class="i" style="left:582px;top:90px" width="16" height="16" viewBox="0 0 16 16"><rect x="0.600" y="0.600" width="14.800" height="14.800" fill="#f6fafd" stroke="#4596d2" stroke-width="1.100"/><path d="M1.200 2.200H14.800" stroke="#a8d2f2" stroke-width="1.400"/><rect x="2.800" y="4.800" width="3" height="3" fill="#c6e3f8" stroke="#4f9eda" stroke-width="0.8"/><rect x="2.800" y="9.800" width="3" height="3" fill="#c6e3f8" stroke="#4f9eda" stroke-width="0.8"/><rect x="7.800" y="4.200" width="5.800" height="9.600" fill="#dedede"/></svg>
<svg class="i" style="left:606px;top:90px" width="16" height="16" viewBox="0 0 16 16"><rect x="0.7" y="4" width="9.6" height="11.4" fill="#e8eefc" stroke="#a7a5dc" stroke-width="1.1"/><path d="M2 9.4H9M2 11.4H9M2 13.4H9" stroke="#bcd0f4" stroke-width="1"/><path d="M3 5.6Q6 1.6 10.4 2.4L13 3.2V7.2L9.4 7.8L6 7.6Q3.6 7.6 3 5.6Z" fill="#f0c090" stroke="#c48850" stroke-width="0.8"/><path d="M4.2 4.4L7.4 6.8M5.8 3.4L9 6.4M7.6 2.8L10.4 5.6" stroke="#c48850" stroke-width="0.7"/><rect x="12.8" y="1" width="3" height="7.4" fill="#5c646c"/><path d="M12.2 1.6V7.8" stroke="#dfe3e6" stroke-width="1.2"/></svg>
<svg class="i" style="left:630px;top:90px" width="16" height="16" viewBox="0 0 16 16"><rect x="0.600" y="0.600" width="14.800" height="12.800" fill="#f6fafd" stroke="#4596d2" stroke-width="1.100"/><path d="M1.400 3H14.600" stroke="#86c2ec" stroke-width="1.800"/><rect x="2.2" y="5.4" width="11.6" height="6.600" fill="#e8eaec"/><path d="M7.4 14.4L14.6 6.4" stroke="#f2b03e" stroke-width="2.8"/><path d="M7.8 14L14.4 6.8" stroke="#fbd88a" stroke-width="0.9"/><path d="M13.6 7.4L15.4 5.4" stroke="#f08ca0" stroke-width="2.8"/><path d="M6.4 15.6L7 13.6L8.4 14.8Z" fill="#6a5a3a"/></svg>
<svg class="i" style="left:660px;top:90px" width="16" height="16" viewBox="0 0 16 16"><rect x="1.4" y="2.4" width="2.8" height="11.2" fill="#a8d0f2" stroke="#5f9fdc" stroke-width="0.9"/><path d="M12.6 2.2V13.8L6 8Z" fill="#a8d0f2" stroke="#5f9fdc" stroke-width="0.9" stroke-linejoin="round"/></svg>
<svg class="i" style="left:683px;top:90px" width="16" height="16" viewBox="0 0 16 16"><path d="M10.8 2.2V13.8L4.2 8Z" fill="#a8d0f2" stroke="#5f9fdc" stroke-width="0.9" stroke-linejoin="round"/></svg>
<svg class="i" style="left:743px;top:90px" width="16" height="16" viewBox="0 0 16 16"><path d="M4.4 2.2V13.8L11 8Z" fill="#a8d0f2" stroke="#5f9fdc" stroke-width="0.9" stroke-linejoin="round"/></svg>
<svg class="i" style="left:766px;top:90px" width="16" height="16" viewBox="0 0 16 16"><rect x="11.8" y="2.4" width="2.8" height="11.2" fill="#a8d0f2" stroke="#5f9fdc" stroke-width="0.9"/><path d="M3.4 2.2V13.8L10 8Z" fill="#a8d0f2" stroke="#5f9fdc" stroke-width="0.9" stroke-linejoin="round"/></svg>
<svg class="i" style="left:796px;top:90px" width="16" height="16" viewBox="0 0 16 16"><path d="M7.4 13.6A5.3 5.6 0 0 1 4.4 3.8" fill="none" stroke="url(#rf1)" stroke-width="3"/><path d="M8.6 2.4A5.3 5.6 0 0 1 11.6 12.2" fill="none" stroke="url(#rf2)" stroke-width="3"/><path d="M1.3 1H7.8V7.6Z" fill="#6cbcf6" stroke="#3f8edc" stroke-width="0.9" stroke-linejoin="round"/><path d="M8.3 8.4L15 14.7H8.3Z" fill="#52b8fa" stroke="#3f8edc" stroke-width="0.9" stroke-linejoin="round"/></svg>
<svg class="i" style="left:826px;top:90px" width="16" height="16" viewBox="0 0 16 16"><rect x="0.7" y="1.7" width="12.8" height="12.8" rx="2" fill="#ec9a44" stroke="#c67c30" stroke-width="1"/><path d="M1.6 3.4H12.6" stroke="#f6bd7c" stroke-width="1.2"/><path d="M4.2 5.2L10 11M10 5.2L4.2 11" stroke="#fff" stroke-width="2"/></svg>
<svg class="i" style="left:18px;top:90px" width="16" height="16" viewBox="0 0 16 16"><path d="M0.6 13.4V2.2Q0.6 1.3 1.5 1.3H6.2L7.8 2.9H12.6V5.6H0.600Z" fill="#f0c22c" stroke="#c4950e" stroke-width="1" stroke-linejoin="round"/><path d="M0.6 13.5V5.5" stroke="#c4950e"/><rect x="2.300" y="5.4" width="12.300" height="8.100" fill="url(#fg)" stroke="#c4950e" stroke-width="1"/><path d="M0.6 13.5H2.5" stroke="#c4950e"/></svg>
<svg class="i" style="left:196px;top:91px" width="11" height="12" viewBox="0 0 11 12"><path d="M2.5 0.6H8.500M3.500 0.6V5M7.5 0.6V5M1.2 7Q1.2 5.2 3.2 5.2H7.8Q9.8 5.200 9.8 7ZM5.5 7V11.600" stroke="#5a5a5a" stroke-width="0.9" fill="#fbfbfb"/><path d="M3.9 1.2H7.1V4.900H3.9Z" fill="#fbfbfb"/><path d="M6.4 1.400V4.600" stroke="#a0a0a0" stroke-width="0.8"/></svg>
<svg class="i" style="left:14px;top:116px" width="9" height="9" viewBox="0 0 9 9"><rect x="0.5" y="0.5" width="8" height="8" rx="1" fill="#fafafa" stroke="#919191"/><path d="M2.5 4.5H6.5M4.5 2.5V6.5" stroke="#2c3c8c" stroke-width="1"/></svg>
<svg class="i" style="left:27px;top:113px" width="16" height="16" viewBox="0 0 16 16"><path d="M0.6 13.4V2.2Q0.6 1.3 1.5 1.3H6.2L7.8 2.9H12.6V5.6H0.600Z" fill="#f0c22c" stroke="#c4950e" stroke-width="1" stroke-linejoin="round"/><path d="M0.6 13.5V5.5" stroke="#c4950e"/><rect x="2.300" y="5.4" width="12.300" height="8.100" fill="url(#fg)" stroke="#c4950e" stroke-width="1"/><path d="M0.6 13.5H2.5" stroke="#c4950e"/></svg>
<svg class="i" style="left:14px;top:135px" width="9" height="9" viewBox="0 0 9 9"><rect x="0.5" y="0.5" width="8" height="8" rx="1" fill="#fafafa" stroke="#919191"/><path d="M2.5 4.5H6.5M4.5 2.5V6.5" stroke="#2c3c8c" stroke-width="1"/></svg>
<svg class="i" style="left:27px;top:132px" width="16" height="16" viewBox="0 0 16 16"><path d="M0.6 13.4V2.2Q0.6 1.3 1.5 1.3H6.2L7.8 2.9H12.6V5.6H0.600Z" fill="#f0c22c" stroke="#c4950e" stroke-width="1" stroke-linejoin="round"/><path d="M0.6 13.5V5.5" stroke="#c4950e"/><rect x="2.300" y="5.4" width="12.300" height="8.100" fill="url(#fg)" stroke="#c4950e" stroke-width="1"/><path d="M0.6 13.5H2.5" stroke="#c4950e"/></svg>
<svg class="i" style="left:14px;top:154px" width="9" height="9" viewBox="0 0 9 9"><rect x="0.5" y="0.5" width="8" height="8" rx="1" fill="#fafafa" stroke="#919191"/><path d="M2.5 4.5H6.5" stroke="#2c3c8c" stroke-width="1"/></svg>
<svg class="i" style="left:27px;top:151px" width="16" height="16" viewBox="0 0 16 16"><path d="M0.6 13.4V2.2Q0.6 1.3 1.5 1.3H6.2L7.8 2.9H12.4V6.4H3L0.6 13.4Z" fill="#f0c22c" stroke="#c4950e" stroke-width="1" stroke-linejoin="round"/><path d="M0.8 13.5L3.400 6.3H15.5L12.8 13.500Z" fill="url(#fg)" stroke="#c4950e" stroke-width="1" stroke-linejoin="round"/></svg>
<svg class="i" style="left:30px;top:173px" width="9" height="9" viewBox="0 0 9 9"><rect x="0.5" y="0.5" width="8" height="8" rx="1" fill="#fafafa" stroke="#919191"/><path d="M2.5 4.5H6.5" stroke="#2c3c8c" stroke-width="1"/></svg>
<svg class="i" style="left:42px;top:170px" width="16" height="16" viewBox="0 0 16 16"><path d="M0.6 13.4V2.2Q0.6 1.3 1.5 1.3H6.2L7.8 2.9H12.4V6.4H3L0.6 13.4Z" fill="#f0c22c" stroke="#c4950e" stroke-width="1" stroke-linejoin="round"/><path d="M0.8 13.5L3.400 6.3H15.5L12.8 13.500Z" fill="url(#fg)" stroke="#c4950e" stroke-width="1" stroke-linejoin="round"/></svg>
<svg class="i" style="left:58px;top:188px" width="14" height="16" viewBox="0 0 14 16"><path d="M0.6 0.6H9.4L13.4 4.6V15.4H0.6Z" fill="#ededed" stroke="#7c7c7c" stroke-width="1" stroke-linejoin="round"/><path d="M9.4 0.6V4.6H13.4" fill="#dadada" stroke="#8c8c8c" stroke-width="0.8"/><rect x="2.2" y="10.8" width="9.6" height="3" fill="#cfcfcf" stroke="#a4a4a4" stroke-width="0.8"/></svg>
<svg class="i" style="left:58px;top:213px" width="14" height="16" viewBox="0 0 14 16"><path d="M0.6 0.6H9.4L13.4 4.6V15.4H0.6Z" fill="#ededed" stroke="#7c7c7c" stroke-width="1" stroke-linejoin="round"/><path d="M9.4 0.6V4.6H13.4" fill="#dadada" stroke="#8c8c8c" stroke-width="0.8"/><rect x="2.2" y="10.8" width="9.6" height="3" fill="#cfcfcf" stroke="#a4a4a4" stroke-width="0.8"/></svg>
<svg class="i" style="left:58px;top:237px" width="14" height="16" viewBox="0 0 14 16"><path d="M0.6 0.6H9.4L13.4 4.6V15.4H0.6Z" fill="#ededed" stroke="#7c7c7c" stroke-width="1" stroke-linejoin="round"/><path d="M9.4 0.6V4.6H13.4" fill="#dadada" stroke="#8c8c8c" stroke-width="0.8"/><rect x="2.2" y="10.8" width="9.6" height="3" fill="#cfcfcf" stroke="#a4a4a4" stroke-width="0.8"/></svg>
<svg class="i" style="left:58px;top:256px" width="14" height="16" viewBox="0 0 14 16"><path d="M0.6 0.6H9.4L13.4 4.6V15.4H0.6Z" fill="#ededed" stroke="#7c7c7c" stroke-width="1" stroke-linejoin="round"/><path d="M9.4 0.6V4.6H13.4" fill="#dadada" stroke="#8c8c8c" stroke-width="0.8"/><rect x="2.2" y="10.8" width="9.6" height="3" fill="#cfcfcf" stroke="#a4a4a4" stroke-width="0.8"/></svg>
<svg class="i" style="left:58px;top:275px" width="14" height="16" viewBox="0 0 14 16"><path d="M0.6 0.6H9.4L13.4 4.6V15.4H0.6Z" fill="#ededed" stroke="#7c7c7c" stroke-width="1" stroke-linejoin="round"/><path d="M9.4 0.6V4.6H13.4" fill="#dadada" stroke="#8c8c8c" stroke-width="0.8"/><rect x="2.2" y="10.8" width="9.6" height="3" fill="#cfcfcf" stroke="#a4a4a4" stroke-width="0.8"/></svg>
<svg class="i" style="left:58px;top:294px" width="14" height="16" viewBox="0 0 14 16"><path d="M0.6 0.6H9.4L13.4 4.6V15.4H0.6Z" fill="#ededed" stroke="#7c7c7c" stroke-width="1" stroke-linejoin="round"/><path d="M9.4 0.6V4.6H13.4" fill="#dadada" stroke="#8c8c8c" stroke-width="0.8"/><rect x="2.2" y="10.8" width="9.6" height="3" fill="#cfcfcf" stroke="#a4a4a4" stroke-width="0.8"/></svg>
<svg class="i" style="left:30px;top:317px" width="9" height="9" viewBox="0 0 9 9"><rect x="0.5" y="0.5" width="8" height="8" rx="1" fill="#fafafa" stroke="#919191"/><path d="M2.5 4.5H6.5M4.5 2.5V6.5" stroke="#2c3c8c" stroke-width="1"/></svg>
<svg class="i" style="left:42px;top:313px" width="16" height="16" viewBox="0 0 16 16"><path d="M0.6 13.4V2.2Q0.6 1.3 1.5 1.3H6.2L7.8 2.9H12.6V5.6H0.600Z" fill="#f0c22c" stroke="#c4950e" stroke-width="1" stroke-linejoin="round"/><path d="M0.6 13.5V5.5" stroke="#c4950e"/><rect x="2.300" y="5.4" width="12.300" height="8.100" fill="url(#fg)" stroke="#c4950e" stroke-width="1"/><path d="M0.6 13.5H2.5" stroke="#c4950e"/></svg>
<svg class="i" style="left:17px;top:522px" width="14" height="16" viewBox="0 0 14 16"><path d="M0.6 0.6H9.4L13.4 4.6V15.4H0.6Z" fill="#ededed" stroke="#7c7c7c" stroke-width="1" stroke-linejoin="round"/><path d="M9.4 0.6V4.6H13.4" fill="#dadada" stroke="#8c8c8c" stroke-width="0.8"/><rect x="2.2" y="10.8" width="9.6" height="3" fill="#cfcfcf" stroke="#a4a4a4" stroke-width="0.8"/></svg>
<svg class="i" style="left:9px;top:542px" width="16" height="16" viewBox="0 0 16 16"><ellipse cx="8" cy="14" rx="6" ry="1.800" fill="#555" opacity=".45"/><circle cx="8" cy="7.200" r="6.300" fill="url(#gs)" stroke="#2a58b4" stroke-width="0.5"/><ellipse cx="8" cy="4" rx="4.400" ry="2.400" fill="#fff" opacity=".3"/><rect x="6.900" y="6.800" width="2.300" height="3.400" rx="0.4" fill="#fff"/><rect x="6.900" y="4" width="2.300" height="1.800" rx="0.4" fill="#fff"/></svg>
<svg class="i" style="left:97px;top:542px" width="16" height="16" viewBox="0 0 16 16"><path d="M1 1.6L5.6 0.6L9.4 1.6V12.4L5 13.8L1 12.4Z" fill="#b0b4b8" stroke="#6d7378" stroke-width="0.8"/><path d="M5.2 1V13.6" stroke="#8a8f94" stroke-width="0.8"/><path d="M1.8 3V11.6" stroke="#d8dbde" stroke-width="1"/><circle cx="7.4" cy="10.4" r="0.8" fill="#4cc04c"/><rect x="7.4" y="6" width="8" height="6.4" rx="0.6" fill="#4aa8f0" stroke="#2a7cc8" stroke-width="0.9"/><path d="M8.2 7H14.6" stroke="#9dd2fa" stroke-width="1"/><ellipse cx="11.4" cy="14.4" rx="3" ry="1.2" fill="#8a8f94"/><rect x="10.6" y="12.4" width="1.6" height="1.8" fill="#7a7f84"/></svg>
<svg class="i" style="left:174px;top:542px" width="16" height="16" viewBox="0 0 16 16"><path d="M0.8 15.2Q0.8 10.6 7.4 10.6Q14 10.6 14 15.2Z" fill="#dfe4f6" stroke="#5b62b4" stroke-width="1"/><path d="M1.4 14.8H13.4" stroke="#5b62b4" stroke-width="1.4"/><ellipse cx="7.4" cy="6.4" rx="3.5" ry="4.2" fill="#fbe2c6" stroke="#d9a878" stroke-width="0.7"/><path d="M3.6 6.4Q3 1 7.6 1.2Q12 1.4 11.2 6.2Q10.6 3.8 8.6 3.6Q5.6 3.4 3.6 6.4Z" fill="#9a6a2c"/><path d="M5.6 10.4L7.4 12.8L9.2 10.4" fill="#fff" stroke="#c9cde4" stroke-width="0.5"/></svg>
<svg class="i" style="left:283px;top:543px" width="16" height="16" viewBox="0 0 16 16"><rect x="0.7" y="2" width="13.6" height="12.8" rx="1" fill="#f9f4d8" stroke="#5c9e48" stroke-width="1.1"/><path d="M1 2.4H14V6H1Z" fill="#66ae50"/><path d="M3.6 0.6V3.4M11.2 0.6V3.4" stroke="#8a8a8a" stroke-width="1.6"/><path d="M1.2 8.8H13.8M1.2 11.6H13.8M4.4 6.2V14.4M7.5 6.2V14.4M10.6 6.2V14.4" stroke="#e2c46a" stroke-width="0.9"/><rect x="7.9" y="9.2" width="2.4" height="2.2" fill="#3a78d4"/></svg>
<div class="t" style="left:184.00px;top:8px;font-size:15px;letter-spacing:0.031px;color:#1b1b1b;">Название Вашей организации - Универсальная Система Учета - [Отчет - Свод по продавцам]</div>
<div class="t" style="left:39.00px;top:38px;font-size:12px;letter-spacing:0.266px;">Программа</div>
<div class="t" style="left:116.00px;top:38px;font-size:12px;letter-spacing:-0.448px;">База данных</div>
<div class="t" style="left:195.00px;top:38px;font-size:12px;letter-spacing:0.026px;">Команды</div>
<div class="t" style="left:258.75px;top:38px;font-size:12px;letter-spacing:0.120px;">Окно</div>
<div class="t" style="left:299.25px;top:38px;font-size:12px;letter-spacing:-0.305px;">Справка</div>
<div class="t" style="left:247.75px;top:92px;font-size:12px;letter-spacing:-0.320px;">Печать...</div>
<div class="t" style="left:447.60px;top:92px;font-size:12px;letter-spacing:-1.101px;">100%</div>
<div class="t" style="left:707.00px;top:92px;font-size:12px;letter-spacing:0.000px;">1</div>
<div class="t" style="left:845.00px;top:92px;font-size:12px;letter-spacing:-0.086px;">Закрыть</div>
<div class="t" style="left:37.60px;top:91px;font-size:12px;letter-spacing:-0.560px;">Меню пользователя</div>
<div class="t" style="left:46.80px;top:115px;font-size:11.5px;letter-spacing:-0.561px;">Модули</div>
<div class="t" style="left:46.80px;top:134px;font-size:11.5px;letter-spacing:-0.327px;">Справочники</div>
<div class="t" style="left:46.80px;top:153px;font-size:11.5px;letter-spacing:-0.113px;">Отчеты</div>
<div class="t" style="left:62.00px;top:172px;font-size:11.5px;letter-spacing:-0.231px;">Деньги</div>
<div class="t" style="left:77.00px;top:191px;font-size:11.5px;letter-spacing:-0.260px;">Движение средств</div>
<div class="t" style="left:77.00px;top:210px;font-size:11.5px;letter-spacing:-0.213px;">Движение средств.</div>
<div class="t" style="left:77.00px;top:223px;font-size:11.5px;letter-spacing:-0.636px;">Подробно</div>
<div class="t" style="left:77.00px;top:240px;font-size:11.5px;letter-spacing:-0.175px;">Долги клиентов</div>
<div class="t" style="left:77.00px;top:259px;font-size:11.5px;letter-spacing:-0.215px;">Куб продаж</div>
<div class="t" style="left:77.00px;top:278px;font-size:11.5px;letter-spacing:-0.297px;">Реестр платежей</div>
<div class="t" style="left:77.00px;top:297px;font-size:11.5px;letter-spacing:-0.396px;color:#fff;">Свод по продавцам</div>
<div class="t" style="left:61.50px;top:316px;font-size:11.5px;letter-spacing:-0.574px;">Склад</div>
<div class="t" style="left:261.90px;top:499px;font-size:11.5px;letter-spacing:-0.313px;">Страница: 1 из 1</div>
<div class="t" style="left:37.50px;top:525px;font-size:11.5px;letter-spacing:-0.229px;">Отчет - Свод по продавцам</div>
<div class="t" style="left:33.00px;top:546px;font-size:11.5px;letter-spacing:-0.123px;">2.0.923.10</div>
<div class="t" style="left:120.50px;top:546px;font-size:11.5px;letter-spacing:-0.424px;">localhost</div>
<div class="t" style="left:196.25px;top:546px;font-size:11.5px;letter-spacing:-0.887px;">SYSDBA (MAIN)</div>
<div class="t" style="left:306.50px;top:546px;font-size:11.5px;letter-spacing:-0.312px;">27.07.2016</div>
<div class="t" style="left:381.50px;top:546px;font-size:11.5px;letter-spacing:-0.078px;">00:00:00:131</div>
<div class="t" style="left:495.50px;top:115px;font-size:16px;letter-spacing:-0.048px;font-weight:700;">Название Вашей организации</div>
<div class="t" style="left:495.50px;top:133px;font-size:10.67px;letter-spacing:0.100px;">Адрес: г. Алматы, ул. Гоголя</div>
<div class="t" style="left:495.50px;top:145px;font-size:10.67px;letter-spacing:-0.004px;">Тел.: +7 (727) 333-00-00, 444-00-00</div>
<div class="t" style="left:495.50px;top:179px;font-size:16px;letter-spacing:-0.056px;font-weight:700;">Свод по продавцам</div>
<div class="t" style="left:495.50px;top:198px;font-size:10.67px;letter-spacing:-0.025px;">За период с <b>12.06.2014</b> по <b>28.06.2016</b></div>
<div class="t" style="left:683.75px;top:258px;font-size:11px;letter-spacing:-0.117px;">116 200</div>
<div class="t" style="left:726.00px;top:258px;font-size:11px;letter-spacing:-0.090px;">Акулов Николай</div>
<div class="t" style="left:690.00px;top:273px;font-size:11px;letter-spacing:-0.331px;">52 200</div>
<div class="t" style="left:726.00px;top:273px;font-size:11px;letter-spacing:-0.141px;">Кукушкина Надежда</div>
<div class="t" style="left:690.00px;top:287px;font-size:11px;letter-spacing:-0.331px;">25 000</div>
<div class="t" style="left:726.00px;top:287px;font-size:11px;letter-spacing:0.096px;">Администратор программы</div>
<div class="t" style="left:695.00px;top:301px;font-size:11px;letter-spacing:-0.133px;">8 000</div>
<div class="t" style="left:726.00px;top:301px;font-size:11px;letter-spacing:-0.219px;">Воробьёва Елена</div>
<div class="t" style="left:371.75px;top:273px;font-size:11px;letter-spacing:-0.200px;">57.7 %</div>
<div class="t" style="left:565.80px;top:382px;font-size:11px;letter-spacing:-0.410px;">3.97 %</div>
<div class="t" style="left:543.00px;top:421px;font-size:11px;letter-spacing:-0.362px;">12.41 %</div>
<div class="t" style="left:362.50px;top:452px;font-size:11px;letter-spacing:-0.146px;">25.92 %</div>
</body></html>
